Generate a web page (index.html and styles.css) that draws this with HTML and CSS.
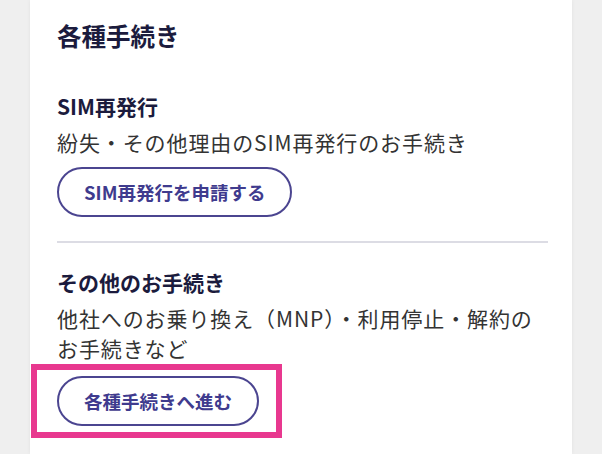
FILE: index.html
```html
<!DOCTYPE html>
<html lang="ja">
<head>
<meta charset="utf-8">
<link rel="stylesheet" href="styles.css">
</head>
<body>
<div class="page">
  <section class="card">
    <h2 class="title">各種手続き</h2>
    <div class="item">
      <h3 class="item-title">SIM再発行</h3>
      <p class="item-desc">紛失・その他理由のSIM再発行のお手続き</p>
      <a class="btn" href="#">SIM再発行を申請する</a>
    </div>
    <hr class="divider">
    <div class="item">
      <h3 class="item-title">その他のお手続き</h3>
      <p class="item-desc">他社へのお乗り換え（MNP）・利用停止・解約のお手続きなど</p>
      <div class="highlight">
        <a class="btn" href="#">各種手続きへ進む</a>
      </div>
    </div>
  </section>
</div>
</body>
</html>
```

FILE: styles.css
```css
html, body {
  margin: 0;
  padding: 0;
}
body {
  background: #efefef;
  font-family: "Noto Sans CJK JP", "Noto Sans", sans-serif;
  width: 602px;
  height: 454px;
  overflow: hidden;
}
.page {
  padding: 0 30px;
}
.card {
  background: #ffffff;
  padding: 18px 24px 0 27px;
  box-shadow: 0 0 4px rgba(0,0,0,0.06);
  height: 454px;
  box-sizing: border-box;
}
.title {
  margin: 0;
  font-size: 24.5px;
  line-height: 36px;
  font-weight: 700;
  color: #1b1b3d;
}
.item {
  display: flex;
  flex-direction: column;
  align-items: flex-start;
}
.title + .item {
  margin-top: 37px;
}
.item-title {
  margin: 0;
  font-size: 21px;
  line-height: 30px;
  font-weight: 700;
  color: #1b1b3d;
}
.item-desc {
  margin: 6px 0 0;
  font-size: 21px;
  line-height: 30px;
  font-weight: 400;
  color: #333333;
  letter-spacing: 0.9px;
}
.btn {
  display: inline-flex;
  align-items: center;
  justify-content: center;
  box-sizing: border-box;
  height: 50px;
  padding: 0 25px;
  margin-top: 10px;
  border: 2px solid #4b4590;
  border-radius: 25px;
  color: #3f3b8e;
  font-size: 18.5px;
  font-weight: 700;
  text-decoration: none;
}
.divider {
  border: 0;
  height: 2px;
  background: #dcdce4;
  margin: 24px 0 24px;
}
.highlight {
  margin: 1px 0 0 -26px;
  padding: 6px 17px 6px 20px;
  border: 6px solid #e8388f;
}
.highlight .btn {
  margin-top: 0;
}
```
